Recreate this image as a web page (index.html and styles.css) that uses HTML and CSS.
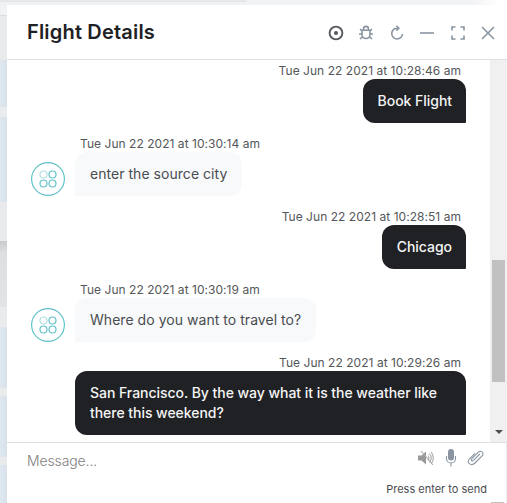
FILE: index.html
```
<!DOCTYPE html>
<html lang="en">
<head>
<meta charset="utf-8">
<title>Flight Details</title>
<link rel="stylesheet" href="styles.css">
</head>
<body>
<div class="app">
  <div class="page-top"><span></span></div>
  <div class="page-left">
    <i class="pale"></i><i class="grey"></i><i class="blue b1"></i><i class="gap g1"></i><i class="blue b2"></i><i class="grey g2"></i><i class="shade"></i><i class="gap g3"></i><i class="blue b3"></i><i class="gap g4"></i><i class="blue b4"></i><i class="gap g4"></i><i class="blue b5"></i>
  </div>
  <section class="panel">
    <header class="header">
      <h1>Flight Details</h1>
      <div class="actions">
        <svg class="target" viewBox="0 0 16 16"><circle cx="8" cy="8" r="6.4"/><circle class="dot" cx="8" cy="8" r="2"/></svg>
        <svg viewBox="0 0 16 16"><path d="M4 5.2h8v4.300a4 4 0 0 1-8 0zM5.600 5V3.800a2.400 2.400 0 0 1 4.800 0V5M4 5.800 2 4.200M12 5.800l2-1.600M4 9H1M12 9h3M4.500 11.800 2 14M11.500 11.800 14 14"/></svg>
        <svg viewBox="0 0 16 16"><path d="M8.600 3.200A5.400 5.400 0 1 0 13.500 9M8.400 3.200h1.400M7.400.8 9.800 3.200 7.400 5.800"/></svg>
        <svg viewBox="0 0 16 16"><path d="M1 8h14"/></svg>
        <svg class="square" viewBox="0 0 16 16"><path d="M2 5.500V2h3.500M10.500 2H14v3.500M14 10.500V14h-3.500M5.500 14H2v-3.500"/></svg>
        <svg viewBox="0 0 16 16"><path d="m2 2 12 12M14 2 2 14"/></svg>
      </div>
    </header>
    <div class="body">
      <div class="messages">
        <div class="msg user"><time>Tue Jun 22 2021 at 10:28:46 am</time><p>Book Flight</p></div>
        <div class="msg bot"><time>Tue Jun 22 2021 at 10:30:14 am</time><div class="line"><svg class="avatar" viewBox="0 0 34 34"><circle cx="17" cy="17" r="16.400"/><circle class="faint" cx="12.500" cy="12.500" r="3.500"/><circle cx="21.500" cy="12.500" r="3.500"/><circle cx="12.500" cy="21.500" r="3.500"/><circle cx="21.500" cy="21.500" r="3.500"/></svg><p>enter the source city</p></div></div>
        <div class="msg user"><time>Tue Jun 22 2021 at 10:28:51 am</time><p>Chicago</p></div>
        <div class="msg bot"><time>Tue Jun 22 2021 at 10:30:19 am</time><div class="line"><svg class="avatar" viewBox="0 0 34 34"><circle cx="17" cy="17" r="16.400"/><circle class="faint" cx="12.500" cy="12.500" r="3.500"/><circle cx="21.500" cy="12.500" r="3.500"/><circle cx="12.500" cy="21.500" r="3.500"/><circle cx="21.500" cy="21.500" r="3.500"/></svg><p>Where do you want to travel to?</p></div></div>
        <div class="msg user wide"><time>Tue Jun 22 2021 at 10:29:26 am</time><p>San Francisco. By the way what it is the weather like<br>there this weekend?</p></div>
      </div>
      <div class="scrollbar"><div class="thumb"></div><div class="arrow"></div></div>
    </div>
    <footer class="footer">
      <div class="compose">
        <span class="placeholder">Message...</span>
        <div class="tools">
          <svg class="speaker" viewBox="0 0 16 16"><path class="solid" d="M0 5.500h3.500L8 1.500v13l-4.500-4H0z"/><path d="M10 5.500q2 2.500 0 5M11.500 3.500q3.500 4.500 0 9M13.300 2q4 6 0 12M3 1l12 14"/></svg>
          <svg class="mic" viewBox="0 0 12 18"><rect class="solid" x="3" y="0" width="6" height="11.500" rx="3"/><path d="M1.500 7v2.500a4.500 4.500 0 0 0 9 0V7M6 14v3.500"/></svg>
          <svg class="clip" viewBox="0 0 18 16"><path d="M12.800 4 6.500 10.300c-1.300 1.300-3 0-1.800-1.400L11 2.400c2.700-2.700 6.800.2 4.300 3.300L8 13c-3.500 3.500-9 .2-5.700-4L8 3.300"/></svg>
        </div>
      </div>
      <div class="hint">Press enter to send</div>
      <div class="edge"></div>
    </footer>
  </section>
</div>
</body>
</html>
```

FILE: styles.css
```
* { box-sizing: border-box; }
body { margin: 0; overflow: hidden; font-family: Inter, "Liberation Sans", sans-serif; color: #202124; }
.app { width: 507px; height: 503px; display: grid; grid-template: 5px 498px / 7px 500px; background: #f8f9fb; }
.page-top { grid-column: 1 / 3; background: linear-gradient(90deg, #f1f2f4 0, #f1f2f4 470px, #fff 500px); }
.page-top span { display: block; width: 247px; height: 2px; background: #e6e7e8; }
.page-left { display: flex; flex-direction: column; }
.page-left i { flex: none; }
.pale { height: 10px; background: #f1f2f3; }
.grey { height: 45px; background: #e9eaeb; border-top: 1px solid #dcdddf; }
.blue { background: linear-gradient(90deg, #dfe7f0, #d8e0ea); }
.gap { background: #e9ebed; }
.b1 { height: 47px; } .g1 { height: 10px; } .b2 { height: 85px; }
.grey.g2 { height: 39px; border: 0; }
.shade { height: 66px; background: linear-gradient(#c9cccf, #dddfe2 12px, #e1e3e6); }
.g3 { height: 20px; } .b3 { height: 61px; } .g4 { height: 8px; } .b4 { height: 61px; } .b5 { height: 38px; }
.panel { display: flex; flex-direction: column; background: #fff; }
.header { height: 55px; border-bottom: 1px solid #dddfe2; padding: 0 11px 0 20px; display: flex; align-items: center; justify-content: space-between; }
h1 { margin: 0; font-size: 20px; line-height: 24px; font-weight: 600; letter-spacing: .18px; }
.actions { display: flex; gap: 14.500px; padding-top: 2px; }
svg { display: block; fill: none; stroke: #8995a1; stroke-width: 1.600; }
.actions svg { width: 16px; height: 16px; }
.actions .target { stroke: #56595d; stroke-width: 1.900; }
.target .dot { fill: #56595d; stroke: none; }
.body { height: 382px; display: flex; justify-content: space-between; }
.messages { width: 459px; padding: 3px 0 0 24px; display: flex; flex-direction: column; gap: 13px; }
.msg { display: flex; flex-direction: column; }
.user { align-items: flex-end; }
time { height: 16px; line-height: 16px; font-size: 12px; letter-spacing: .04px; color: #54575a; white-space: nowrap; }
.user time { padding-right: 5px; }
.bot time { padding-left: 49px; }
p { margin: 0; padding: 12px 15px; font-size: 14px; line-height: 20px; white-space: nowrap; }
.user p { background: #202124; color: #f5f5f5; border-radius: 12px 12px 1px 12px; font-weight: 500; letter-spacing: -.04px; }
.user p { padding-right: 14px; }
.wide p { width: 391px; border-radius: 12px 12px 1px 12px; }
.bot p { background: #f8f9fb; color: #494c50; border-radius: 12px 12px 12px 1px; letter-spacing: .04px; }
.line { display: flex; align-items: flex-end; gap: 10px; }
.avatar { width: 34px; height: 34px; stroke: #62c2c8; stroke-width: 1.200; }
.faint { opacity: .5; }
.scrollbar { width: 17px; background: #f0f0f0; display: flex; flex-direction: column; align-items: center; padding: 200px 0 8px; justify-content: space-between; }
.thumb { width: 13px; height: 122px; background: #c1c1c1; }
.arrow { border: 4px solid transparent; border-top-color: #505050; border-bottom: 0; }
.footer { height: 61px; border-top: 1px solid #dddfe2; border-right: 1px solid #eceef0; padding: 3px 19px 0 20px; }
.compose { display: flex; justify-content: space-between; height: 28px; align-items: center; }
.placeholder { font-size: 14px; font-weight: 300; letter-spacing: -.12px; color: #808080; }
.tools { display: flex; align-items: center; gap: 10px; padding: 0 2px 4px 0; }
.tools svg { stroke-width: 1.100; }
.solid { fill: #8995a1; stroke: none; }
.tools .speaker { width: 16px; height: 16px; stroke: #aaa; margin-right: 1px; }
.speaker .solid { fill: #999; }
.mic { width: 12px; height: 18px; }
.clip { width: 18px; height: 16px; }
.hint { height: 18px; line-height: 18px; margin-top: 6px; text-align: right; font-size: 11px; color: #484b4f; }
.edge { width: 13px; height: 1px; margin: 4px -17px 0 auto; background: #c1c1c1; }
```
